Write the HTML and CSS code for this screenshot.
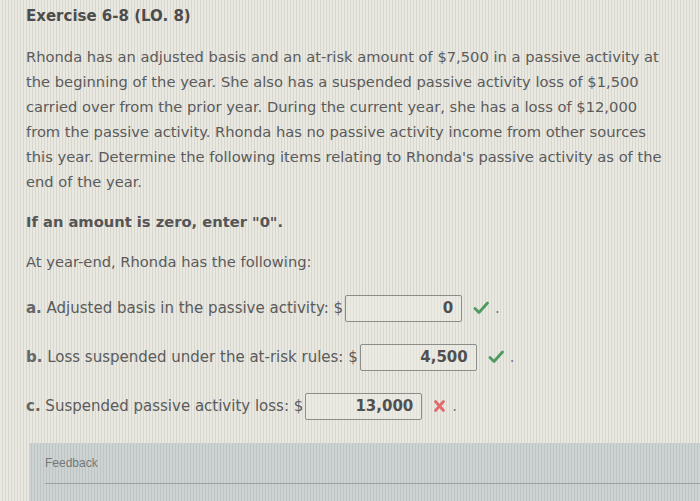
FILE: index.html
```html
<!DOCTYPE html>
<html>
<head>
<meta charset="utf-8">
<link rel="stylesheet" href="styles.css">
</head>
<body>
<div class="page">
  <h1 class="title">Exercise 6-8 (LO. 8)</h1>
  <p class="para">Rhonda has an adjusted basis and an at-risk amount of $7,500 in a passive activity at the beginning of the year. She also has a suspended passive activity loss of $1,500 carried over from the prior year. During the current year, she has a loss of $12,000 from the passive activity. Rhonda has no passive activity income from other sources this year. Determine the following items relating to Rhonda's passive activity as of the end of the year.</p>
  <p class="note">If an amount is zero, enter "0".</p>
  <p class="lead">At year-end, Rhonda has the following:</p>
  <div class="items">
    <div class="item">
      <span class="lbl"><b>a.</b> Adjusted basis in the passive activity: $</span>
      <span class="box">0</span>
      <svg class="mark" width="16" height="16" viewBox="0 0 16 16"><polyline points="2,8.5 6,12.5 14.5,3" fill="none" stroke="#4f9a60" stroke-width="2.8" stroke-linecap="round" stroke-linejoin="round"/></svg>
      <span class="dot">.</span>
    </div>
    <div class="item">
      <span class="lbl"><b>b.</b> Loss suspended under the at-risk rules: $</span>
      <span class="box">4,500</span>
      <svg class="mark" width="16" height="16" viewBox="0 0 16 16"><polyline points="2,8.5 6,12.5 14.5,3" fill="none" stroke="#4f9a60" stroke-width="2.8" stroke-linecap="round" stroke-linejoin="round"/></svg>
      <span class="dot">.</span>
    </div>
    <div class="item">
      <span class="lbl"><b>c.</b> Suspended passive activity loss: $</span>
      <span class="box">13,000</span>
      <svg class="mark" width="13" height="14" viewBox="0 0 13 14"><path d="M2.5,2.5 L10.5,11.5 M10.5,2.5 L2.5,11.5" fill="none" stroke="#e26a6a" stroke-width="2.8" stroke-linecap="round"/></svg>
      <span class="dot">.</span>
    </div>
  </div>
  <div class="feedback">
    <div class="fb-title">Feedback</div>
    <div class="fb-line"></div>
  </div>
</div>
</body>
</html>
```
FILE: styles.css
```css
html, body {
  margin: 0;
  padding: 0;
}
body {
  width: 700px;
  height: 501px;
  overflow: hidden;
  background-color: #e3e2da;
  background-image: repeating-linear-gradient(90deg, #e9e8e1 0 2px, #d8d7cf 2px 3px);
  font-family: "DejaVu Sans", Verdana, sans-serif;
  color: #5b5b5b;
}
.page {
  padding: 6px 0 0 26px;
}
.title {
  margin: 0;
  font-size: 15px;
  line-height: 20px;
  font-weight: bold;
  color: #4c4c4c;
}
.para {
  margin: 18px 0 0;
  width: 646px;
  font-size: 14.7px;
  line-height: 25px;
}
.note {
  margin: 15px 0 0;
  font-size: 14.7px;
  line-height: 25px;
  font-weight: bold;
  color: #555;
}
.lead {
  margin: 15px 0 0;
  font-size: 14.7px;
  line-height: 25px;
}
.items {
  display: flex;
  flex-direction: column;
  gap: 23px;
  margin-top: 21px;
}
.item {
  display: flex;
  align-items: center;
  height: 26px;
  font-size: 15px;
}
.lbl b {
  color: #666;
}
.box {
  box-sizing: border-box;
  width: 117px;
  height: 27px;
  margin-left: 2px;
  border: 1px solid #8c8c88;
  border-radius: 2px;
  background: rgba(240, 240, 234, 0.35);
  font-weight: bold;
  font-size: 15px;
  text-align: right;
  line-height: 25px;
  padding-right: 8px;
  color: #505050;
}
.mark {
  margin-left: 11px;
  flex: none;
}
.dot {
  margin-left: 6px;
  color: #777;
}
.feedback {
  margin: 24px 0 0 3px;
  height: 80px;
  background-color: #c9cfcf;
  background-image: repeating-linear-gradient(90deg, #cdd3d3 0 2px, #bfc5c5 2px 3px);
  padding: 13px 0 0 16px;
  box-sizing: border-box;
}
.fb-title {
  font-family: "Liberation Sans", Arial, sans-serif;
  font-size: 12px;
  line-height: 14px;
  color: #777;
}
.fb-line {
  margin-top: 13px;
  height: 1px;
  background: #9aa2a2;
}
```
